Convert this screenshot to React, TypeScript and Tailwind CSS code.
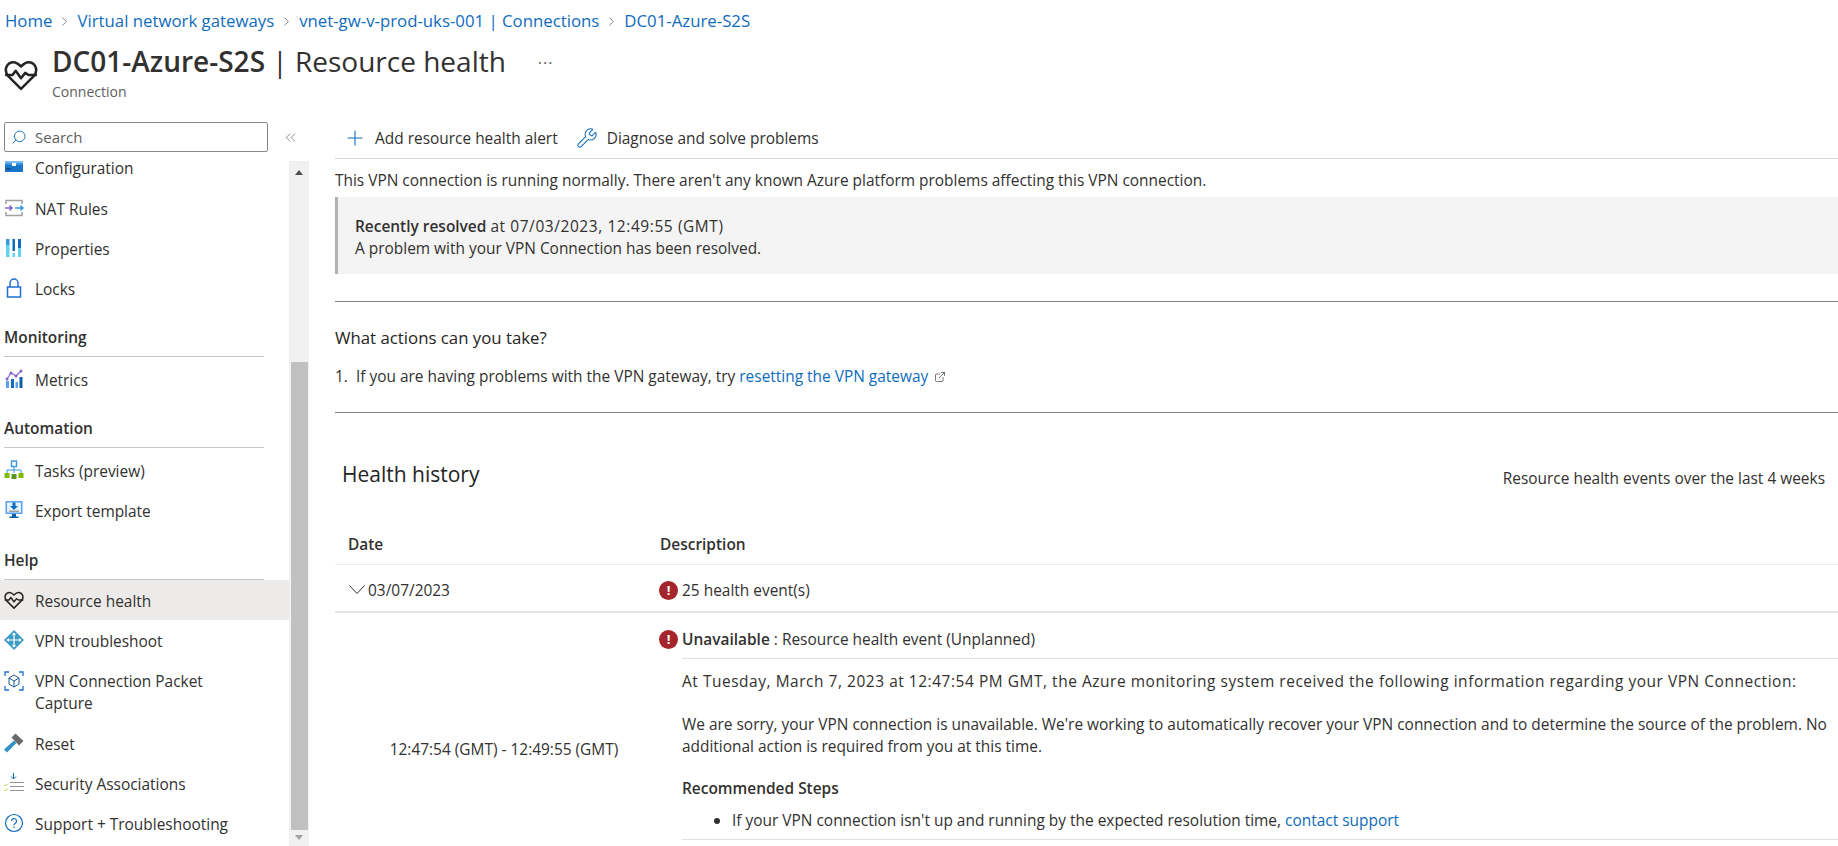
import { ChevronRight, ChevronsLeft, Plus, Search, Wrench, ExternalLink } from 'lucide-react';

const FONT = { fontFamily: '"Open Sans", "Noto Sans", sans-serif' };

function HeartIcon({ size = 20 }: { size?: number }) {
  return (
    <svg width={size} height={size} viewBox="0 0 32 32" fill="none" stroke="#252423" strokeWidth="2.4" strokeLinejoin="round">
      <path d="M16 29 4 17C-1 11 3 4 9 4c3 0 5 2 7 4 2-2 4-4 7-4 6 0 10 7 5 13L16 29Z" />
      <path d="M1 16h7l3-4 5 7 4-5 3 2h8" fill="#fff" />
    </svg>
  );
}

function ErrorDot() {
  return (
    <span className="flex h-[19px] w-[19px] shrink-0 items-center justify-center rounded-full bg-[#a4262c] text-[13px] font-bold leading-none text-white">
      !
    </span>
  );
}

const CrumbSep = () => <ChevronRight size={15} strokeWidth={1.2} className="mx-[5px] text-[#605e5c]" />;

function ConfigIcon() {
  // top of the icon is scrolled out of the list
  return (
    <svg width="20" height="12" viewBox="0 4 20 12">
      <rect x="1" y="1" width="18" height="14" rx="1" fill="#3a96dd" />
      <rect x="1" y="1" width="18" height="5" fill="#83b9f9" />
      <rect x="1" y="8" width="18" height="7" fill="#1b74c5" />
      <rect x="8" y="6" width="4" height="3" fill="#fff" />
      <rect x="2" y="11" width="5" height="1.500" fill="#0f4f8c" />
    </svg>
  );
}
function NatIcon() {
  return (
    <svg width="20" height="20" viewBox="0 0 20 20" fill="none">
      <path d="M2 6V2.500h16V6M2 14v3.500h16V14" stroke="#a0a0a0" strokeWidth="1.500" />
      <path d="M1 10h7m-2.500-2.500L8 10l-2.500 2.500" stroke="#8661c5" strokeWidth="1.500" />
      <path d="M11 10h8m-2.500-2.500L19 10l-2.500 2.500" stroke="#3a96dd" strokeWidth="1.500" />
    </svg>
  );
}
function PropsIcon() {
  return (
    <svg width="20" height="20" viewBox="0 0 20 20">
      <rect x="2" y="1" width="3.500" height="6" fill="#3a96dd" />
      <rect x="2" y="7" width="3.500" height="12" fill="#5ed4f0" />
      <rect x="8.500" y="1" width="2.500" height="12" fill="#0f6cbd" />
      <rect x="8.500" y="15" width="2.500" height="4" fill="#5ed4f0" />
      <rect x="14" y="1" width="3" height="9" fill="#0f6cbd" />
      <rect x="14" y="10" width="3" height="9" fill="#5ed4f0" />
    </svg>
  );
}
function LockIcon() {
  return (
    <svg width="20" height="20" viewBox="0 0 20 20" fill="none" stroke="#1f6fd0" strokeWidth="1.500">
      <rect x="3.500" y="9" width="13" height="10" />
      <path d="M6 9V5a4 4 0 0 1 8 0v4" />
    </svg>
  );
}
function MetricsIcon() {
  return (
    <svg width="20" height="20" viewBox="0 0 20 20">
      <path d="M3 10 7 4l5 3 5-5" fill="none" stroke="#8661c5" strokeWidth="1.200" />
      <circle cx="3" cy="10" r="1.500" fill="#8661c5" />
      <circle cx="7" cy="4" r="1.500" fill="#8661c5" />
      <circle cx="12" cy="7" r="1.500" fill="#8661c5" />
      <circle cx="17" cy="2" r="1.500" fill="#8661c5" />
      <rect x="2" y="12" width="3" height="7" fill="#5ea0ef" />
      <rect x="7" y="10" width="3" height="9" fill="#0f6cbd" />
      <rect x="11.500" y="13" width="2.500" height="6" fill="#5ea0ef" />
      <rect x="15.500" y="8" width="3" height="11" fill="#0f5ea8" />
    </svg>
  );
}
function TasksIcon() {
  return (
    <svg width="20" height="20" viewBox="0 0 20 20">
      <path d="M10 7v6M3 13v-3h14v3" fill="none" stroke="#3a96dd" strokeWidth="1" />
      <rect x="7.500" y="1" width="5" height="5.500" fill="#fff" stroke="#3a96dd" strokeWidth="1.400" />
      <rect x="0.500" y="13" width="5" height="5" fill="#7fba00" />
      <rect x="7.500" y="14" width="5" height="5" fill="#5e9624" />
      <rect x="14.500" y="13" width="5" height="5" fill="#7fba00" />
    </svg>
  );
}
function ExportIcon() {
  return (
    <svg width="20" height="20" viewBox="0 0 20 20">
      <rect x="1.500" y="1" width="17" height="13" fill="#5ea0ef" />
      <rect x="3" y="2.500" width="14" height="10" fill="#e3f2fc" />
      <path d="M8.500 2.500h3V6h2.500L10 10 6 6h2.500V2.500Z" fill="#0f6cbd" />
      <rect x="5" y="10.500" width="10" height="1.500" fill="#a0a0a0" />
      <path d="M8 14h4v2.500h2.500V18h-9v-1.500H8V14Z" fill="#0f5ea8" />
    </svg>
  );
}
function VpnIcon() {
  return (
    <svg width="20" height="20" viewBox="0 0 20 20">
      <path d="M10 0 20 10 10 20 0 10Z" fill="#3e9cc9" />
      <path d="M10 3v14M3 10h14" stroke="#fff" strokeWidth="1.200" />
      <path d="M10 2.500 8 5h4ZM10 17.500 8 15h4ZM2.500 10 5 8v4ZM17.500 10 15 8v4Z" fill="#fff" />
    </svg>
  );
}
function CaptureIcon() {
  return (
    <svg width="20" height="20" viewBox="0 0 20 20" fill="none" stroke="#1f6fd0" strokeWidth="1.300">
      <path d="M1 5V1h4M15 1h4v4M19 15v4h-4M5 19H1v-4" />
      <path d="M10 4 15 7v6L10 16 5 13V7ZM5 7l5 3 5-3M10 10v6" stroke="#1d5a96" strokeWidth="1" />
    </svg>
  );
}
function ResetIcon() {
  return (
    <svg width="20" height="20" viewBox="0 0 20 20">
      <path d="M0 16.500 10 7.500l2.500 2.500L3 19.500Z" fill="#3590c4" />
      <path d="M7.500 4.500 11.500 0.500 19.500 8 15 12.500Z" fill="#6b6b6b" />
    </svg>
  );
}
function SecurityIcon() {
  return (
    <svg width="20" height="20" viewBox="0 0 20 20" fill="none">
      <path d="M9.500 0v6M7 3.500 9.500 6 12 3.500" stroke="#0f6cbd" strokeWidth="1" />
      <path d="M6 9.500h14M6 13.500h14M6 17.500h14" stroke="#949494" strokeWidth="1.200" />
      <path d="M0 11.500 1.500 13 4 10.500M0 16.500 1.500 18 4 15.500" stroke="#b4cf3c" strokeWidth="1" />
    </svg>
  );
}
function SupportIcon() {
  return (
    <svg width="20" height="20" viewBox="0 0 20 20" fill="none">
      <circle cx="10" cy="10" r="8.500" stroke="#0f6cbd" strokeWidth="1.200" />
      <path d="M7.500 8a2.500 2.500 0 1 1 3.700 2.200c-.8.500-1.200 1-1.200 2" stroke="#0f6cbd" strokeWidth="1.200" />
      <circle cx="10" cy="14.300" r=".8" fill="#0f6cbd" />
    </svg>
  );
}

function NavItem({ icon, label, active }: { icon: React.ReactNode; label: string; active?: boolean }) {
  return (
    <div className={`flex h-10 items-center pl-1 leading-[22px] text-[#323130] ${active ? 'bg-[#edebe9]' : ''}`}>
      <span className="flex w-[20px] shrink-0 items-center justify-center">{icon}</span>
      <span className="ml-[11px] w-[240px] pt-px">{label}</span>
    </div>
  );
}

function NavHeading({ label, className }: { label: string; className: string }) {
  return (
    <div className={`flex flex-col justify-end pl-1 ${className}`}>
      <div className="flex h-[37px] w-[260px] items-center border-b border-[#c8c6c4] font-semibold text-[#323130]">
        {label}
      </div>
    </div>
  );
}

function Sidebar() {
  return (
    <div className="flex w-[311px] shrink-0 flex-col">
      <div className="flex h-[39px] items-start">
        <div className="ml-1 flex h-[30px] w-[264px] items-center rounded-[2px] border border-[#8a8886] pl-[6px] text-[#605e5c]">
          <Search size={16} strokeWidth={1.4} className="-scale-x-100 text-[#0f6cbd]" />
          <span className="ml-[8px] text-[15px] leading-[20px]">Search</span>
        </div>
        <ChevronsLeft size={17} strokeWidth={1} className="ml-[14px] mt-[7px] text-[#605e5c]" />
      </div>
      <div className="flex min-h-0 flex-1">
        <div className="w-[289px] shrink-0">
          {/* first row is scrolled partly out of the list */}
          <div className="flex h-[27px] items-start pl-1 leading-[14px] text-[#323130]">
            <span className="flex h-[12px] w-[20px] shrink-0 items-end justify-center"><ConfigIcon /></span>
            <span className="ml-[11px]">Configuration</span>
          </div>
          <NavItem icon={<NatIcon />} label="NAT Rules" />
          <NavItem icon={<PropsIcon />} label="Properties" />
          <NavItem icon={<LockIcon />} label="Locks" />
          <NavHeading label="Monitoring" className="h-[51px] pb-[2px]" />
          <NavItem icon={<MetricsIcon />} label="Metrics" />
          <NavHeading label="Automation" className="h-[51px] pb-[2px]" />
          <NavItem icon={<TasksIcon />} label="Tasks (preview)" />
          <NavItem icon={<ExportIcon />} label="Export template" />
          <NavHeading label="Help" className="h-[50px]" />
          <NavItem icon={<HeartIcon />} label="Resource health" active />
          <NavItem icon={<VpnIcon />} label="VPN troubleshoot" />
          <div className="flex h-[63px] items-start pl-1 pt-[10px] leading-[22px] text-[#323130]">
            <span className="flex h-[22px] w-[20px] shrink-0 items-center justify-center"><CaptureIcon /></span>
            <span className="ml-[11px] w-[200px]">VPN Connection Packet Capture</span>
          </div>
          <NavItem icon={<ResetIcon />} label="Reset" />
          <NavItem icon={<SecurityIcon />} label="Security Associations" />
          <NavItem icon={<SupportIcon />} label="Support + Troubleshooting" />
        </div>
        {/* scrollbar */}
        <div className="flex w-[20px] flex-col items-center bg-[#f1f1f1]">
          <div className="flex h-[22px] items-center text-[#505050]">
            <div className="h-0 w-0 border-x-[4px] border-b-[5px] border-x-transparent border-b-current" />
          </div>
          <div className="mt-[179px] h-[468px] w-[17px] bg-[#c1c1c1]" />
          <div className="mt-[5px] h-0 w-0 border-x-[4px] border-t-[5px] border-x-transparent border-t-[#a3a3a3]" />
        </div>
      </div>
    </div>
  );
}

function Main() {
  return (
    <div className="min-w-0 flex-1 pl-[24px] leading-[22px] text-[#323130]">
      <div className="flex h-[37px] items-center border-b border-[#d6d6d6] pb-[4px]">
        <Plus size={24} strokeWidth={1.1} className="ml-[8px] text-[#0f6cbd]" />
        <span className="ml-[8px]">Add resource health alert</span>
        <Wrench size={22} strokeWidth={1.1} className="ml-[18px] text-[#0f6cbd]" />
        <span className="ml-[9px]">Diagnose and solve problems</span>
      </div>
      <div className="mt-[10px] h-[22px]">
        This VPN connection is running normally. There aren't any known Azure platform problems affecting this VPN connection.
      </div>
      <div className="mt-[6px] h-[77px] border-l-[3px] border-[#b3b0ad] bg-[#f4f4f4] pl-[17px] pt-[18px]">
        <div>
          <span className="font-semibold">Recently resolved</span>{' '}
          <span className="tracking-[0.6px]">at 07/03/2023, 12:49:55 (GMT)</span>
        </div>
        <div>A problem with your VPN Connection has been resolved.</div>
      </div>
      <div className="mt-[27px] border-t border-[#808080]" />
      <div className="mt-[25px] text-[16.800px] text-[#252423]">What actions can you take?</div>
      <div className="mt-[16px]">
        1.&nbsp; If you are having problems with the VPN gateway, try{' '}
        <span className="text-[#0f6cbd]">resetting the VPN gateway</span>
        <ExternalLink size={12} strokeWidth={1.3} className="ml-[6px] inline -translate-y-px text-[#323130]" />
      </div>
      <div className="mt-[25px] border-t border-[#808080]" />
      <div className="mt-[46px] flex items-center justify-between pl-[7px] pr-[13px]">
        <div className="text-[21px] leading-[30px] text-[#252423]">Health history</div>
        <div className="mt-[8px]">Resource health events over the last 4 weeks</div>
      </div>
      <div className="mt-[44px] flex h-[32px] items-start border-b border-[#edebe9] font-semibold">
        <div className="w-[325px] pl-[13px]">Date</div>
        <div>Description</div>
      </div>
      <div className="flex h-[48px] items-center border-b-2 border-[#e6e6e6] pt-[4px]">
        <div className="flex w-[324px] items-center pl-[14px]">
          <svg width="16" height="10" viewBox="0 0 16 10" fill="none" stroke="#323130" strokeWidth="1">
            <path d="M.5.500 8 8.500 15.500.500" />
          </svg>
          <span className="ml-[3px]">03/07/2023</span>
        </div>
        <ErrorDot />
        <span className="ml-[4px]">25 health event(s)</span>
      </div>
      <div className="flex">
        <div className="flex w-[324px] shrink-0 items-center justify-center pl-[14px] pt-[45px]">12:47:54 (GMT) - 12:49:55 (GMT)</div>
        <div className="min-w-0 flex-1 pt-[15px]">
          <div className="flex h-[22px] items-center">
            <ErrorDot />
            <span className="ml-[4px]"><span className="font-semibold">Unavailable</span> : Resource health event (Unplanned)</span>
          </div>
          <div className="ml-[23px] mt-[8px] border-t border-[#e1e1e1] pt-[11px]">
            <div className="tracking-[0.55px]">At Tuesday, March 7, 2023 at 12:47:54 PM GMT, the Azure monitoring system received the following information regarding your VPN Connection:</div>
            <div className="mt-[21px]">We are sorry, your VPN connection is unavailable. We're working to automatically recover your VPN connection and to determine the source of the problem. No additional action is required from you at this time.</div>
            <div className="mt-[20px] font-semibold">Recommended Steps</div>
            <div className="ml-[50px] mt-[10px] list-item list-disc">If your VPN connection isn't up and running by the expected resolution time, <span className="text-[#0f6cbd]">contact support</span></div>
            <div className="mt-[8px] border-t border-[#e1e1e1]" />
          </div>
        </div>
      </div>
    </div>
  );
}

export default function App() {
  return (
    <div className="h-[846px] w-[1838px] overflow-hidden bg-white text-[15.450px]" style={FONT}>
      <div className="flex h-[42px] items-center pl-[5px] text-[16.800px] text-[#0f6cbd]">
        <span>Home</span>
        <CrumbSep />
        <span>Virtual network gateways</span>
        <CrumbSep />
        <span>vnet-gw-v-prod-uks-001 | Connections</span>
        <CrumbSep />
        <span>DC01-Azure-S2S</span>
      </div>
      <div className="flex h-[80px] items-start">
        <span className="ml-1 mt-[16px] w-[48px] shrink-0"><HeartIcon size={34} /></span>
        <div>
          <div className="flex items-center">
            <h1 className="text-[28px] leading-[38px] text-[#323130]">
              <span className="font-semibold">DC01-Azure-S2S</span> | Resource health
            </h1>
            <span className="ml-[32px] mt-[4px] text-base leading-none tracking-[1px] text-[#605e5c]">···</span>
          </div>
          <div className="mt-[4px] text-sm leading-[16px] text-[#605e5c]">Connection</div>
        </div>
      </div>
      <div className="flex h-[724px]">
        <Sidebar />
        <Main />
      </div>
    </div>
  );
}
